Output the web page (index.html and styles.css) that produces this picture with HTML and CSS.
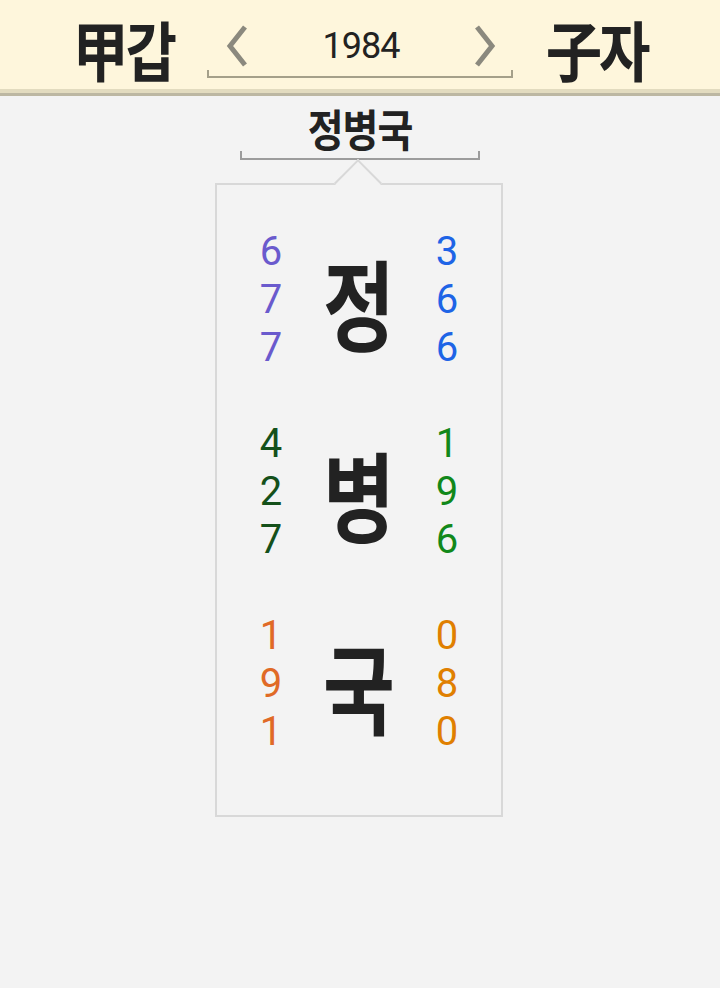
FILE: index.html
```html
<!DOCTYPE html>
<html lang="ko">
<head>
    <meta charset="UTF-8">
    <title>이름 획수</title>
    <link rel="stylesheet" href="styles.css">
</head>
<body>

    <header class="topbar">
        <div class="word"><span class="tall">甲갑</span></div>
        <div class="year-nav">
            <div class="year-row">
                <svg class="chev" viewBox="0 0 24 44"><polyline points="20,3 5,22 20,41"/></svg>
                <span class="year">1984</span>
                <svg class="chev" viewBox="0 0 24 44"><polyline points="4,3 19,22 4,41"/></svg>
            </div>
            <div class="bracket"></div>
        </div>
        <div class="word"><span class="tall">子자</span></div>
    </header>

    <main class="content">
        <div class="name"><span class="tall">정병국</span></div>
        <div class="name-bracket"></div>

        <div class="card">
            <div class="notch"></div>

            <div class="row">
                <div class="nums c1"><span>6</span><span>7</span><span>7</span></div>
                <div class="big"><span class="tall">정</span></div>
                <div class="nums c2"><span>3</span><span>6</span><span>6</span></div>
            </div>

            <div class="row">
                <div class="nums c3"><span>4</span><span>2</span><span>7</span></div>
                <div class="big"><span class="tall">병</span></div>
                <div class="nums c4"><span>1</span><span>9</span><span>6</span></div>
            </div>

            <div class="row">
                <div class="nums c5"><span>1</span><span>9</span><span>1</span></div>
                <div class="big"><span class="tall">국</span></div>
                <div class="nums c6"><span>0</span><span>8</span><span>0</span></div>
            </div>
        </div>
    </main>

</body>
</html>
```

FILE: styles.css
```css
body {
    font-family: "Noto Sans CJK KR", "Noto Sans", sans-serif;
    background: #f3f3f3;
    color: #222;
    margin: 0;
    padding: 0;
}

.tall {
    display: inline-block;
    transform: scaleY(1.15);
}

.topbar {
    height: 89px;
    background: #fef6dc;
    border-bottom: 4px solid #e2dbbf;
    box-shadow: 0 3px 0 #bcb7a2;
    display: flex;
    justify-content: center;
    align-items: flex-start;
    gap: 33px;
}

.word {
    font-size: 56px;
    font-weight: bold;
    line-height: 56px;
    margin-top: 20px;
    letter-spacing: -3px;
}

.year-nav {
    width: 306px;
    margin-top: 22px;
}

.year-row {
    display: flex;
    align-items: center;
    justify-content: space-between;
    padding: 0 16px 0 18px;
    height: 48px;
}

.chev {
    width: 24px;
    height: 44px;
}

.chev polyline {
    fill: none;
    stroke: #8b897e;
    stroke-width: 5;
}

.year {
    font-family: Roboto, sans-serif;
    font-size: 36px;
    letter-spacing: -1px;
    color: #222;
}

.bracket {
    height: 6px;
    border: 2px solid #a5a08a;
    border-top: none;
}

.content {
    display: flex;
    flex-direction: column;
    align-items: center;
    padding-top: 10px;
}

.name {
    font-size: 39px;
    font-weight: bold;
    line-height: 48px;
    letter-spacing: -1px;
}

.name-bracket {
    width: 236px;
    height: 7px;
    border: 2px solid #9c9c9c;
    border-top: none;
}

.card {
    position: relative;
    width: 288px;
    height: 634px;
    margin-top: 23px;
    margin-right: 2px;
    border: 2px solid #d8d8d8;
    padding: 43px 34px 0;
    box-sizing: border-box;
    display: flex;
    flex-direction: column;
    gap: 48px;
}

.notch {
    position: absolute;
    top: -19px;
    left: 50%;
    width: 32px;
    height: 32px;
    margin-left: -18px;
    background: #f3f3f3;
    border-top: 2px solid #d8d8d8;
    border-left: 2px solid #d8d8d8;
    transform: rotate(45deg);
}

.row {
    display: grid;
    grid-template-columns: 40px 1fr 40px;
    align-items: center;
}

.nums {
    display: flex;
    flex-direction: column;
    align-items: center;
    font-family: Roboto, sans-serif;
    font-size: 40px;
    line-height: 48px;
}

.big {
    text-align: center;
    font-size: 78px;
    font-weight: bold;
    line-height: 100px;
}

.big .tall {
    transform: scaleY(1.25);
}

.c1 { color: #6a5acd; }
.c2 { color: #1e64e6; }
.c3 { color: #14501a; }
.c4 { color: #11881a; }
.c5 { color: #e06a26; }
.c6 { color: #e07f00; }
```
